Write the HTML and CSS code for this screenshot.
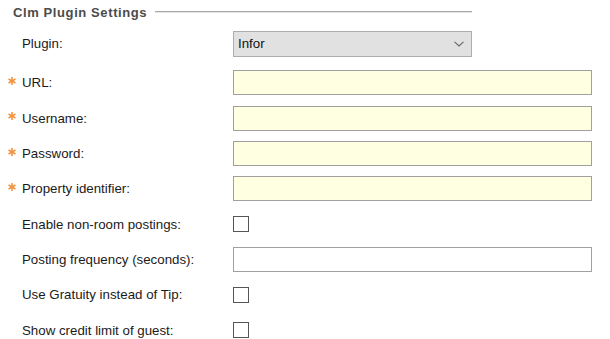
FILE: index.html
```html
<!DOCTYPE html>
<html lang="en">
<head>
    <meta charset="UTF-8">
    <title>Clm Plugin Settings</title>
    <link rel="stylesheet" href="styles.css">
</head>
<body>
    <div class="settings">
        <div class="group-header">
            <span class="group-title">Clm Plugin Settings</span>
            <span class="group-line"></span>
        </div>

        <div class="row first">
            <span class="req"></span>
            <label>Plugin:</label>
            <div class="combo">
                <span>Infor</span>
                <svg width="10" height="6" viewBox="0 0 10 6"><polyline points="0.5,0.8 5,5 9.5,0.8" fill="none" stroke="#666666" stroke-width="1.1"/></svg>
            </div>
        </div>

        <div class="row">
            <span class="req"><svg width="8" height="8" viewBox="0 0 8 8"><g stroke="#f39440" stroke-width="1.6"><line x1="4" y1="0" x2="4" y2="8"/><line x1="0.5" y1="2" x2="7.5" y2="6"/><line x1="0.5" y1="6" x2="7.5" y2="2"/></g></svg></span>
            <label for="url">URL:</label>
            <input type="text" id="url" class="field required">
        </div>

        <div class="row">
            <span class="req"><svg width="8" height="8" viewBox="0 0 8 8"><g stroke="#f39440" stroke-width="1.6"><line x1="4" y1="0" x2="4" y2="8"/><line x1="0.5" y1="2" x2="7.5" y2="6"/><line x1="0.5" y1="6" x2="7.5" y2="2"/></g></svg></span>
            <label for="username">Username:</label>
            <input type="text" id="username" class="field required">
        </div>

        <div class="row">
            <span class="req"><svg width="8" height="8" viewBox="0 0 8 8"><g stroke="#f39440" stroke-width="1.6"><line x1="4" y1="0" x2="4" y2="8"/><line x1="0.5" y1="2" x2="7.5" y2="6"/><line x1="0.5" y1="6" x2="7.5" y2="2"/></g></svg></span>
            <label for="password">Password:</label>
            <input type="text" id="password" class="field required">
        </div>

        <div class="row">
            <span class="req"><svg width="8" height="8" viewBox="0 0 8 8"><g stroke="#f39440" stroke-width="1.6"><line x1="4" y1="0" x2="4" y2="8"/><line x1="0.5" y1="2" x2="7.5" y2="6"/><line x1="0.5" y1="6" x2="7.5" y2="2"/></g></svg></span>
            <label for="property">Property identifier:</label>
            <input type="text" id="property" class="field required">
        </div>

        <div class="row">
            <span class="req"></span>
            <label>Enable non-room postings:</label>
            <span class="check"></span>
        </div>

        <div class="row">
            <span class="req"></span>
            <label for="frequency">Posting frequency (seconds):</label>
            <input type="text" id="frequency" class="field">
        </div>

        <div class="row">
            <span class="req"></span>
            <label>Use Gratuity instead of Tip:</label>
            <span class="check"></span>
        </div>

        <div class="row">
            <span class="req"></span>
            <label>Show credit limit of guest:</label>
            <span class="check"></span>
        </div>
    </div>
</body>
</html>
```

FILE: styles.css
```css
body {
    margin: 0;
    background-color: #ffffff;
    font-family: "Liberation Sans", Arial, sans-serif;
    font-size: 13.3px;
    color: #1b1b1b;
}
.settings {
    padding-left: 8px;
    width: 584px;
}
.group-header {
    display: flex;
    align-items: center;
    width: 459px;
    height: 16px;
    padding-top: 4px;
    margin-left: 5px;
    margin-bottom: 6px;
}
.group-title {
    font-size: 13px;
    font-weight: bold;
    color: #4b4b4b;
    letter-spacing: 0.6px;
    white-space: nowrap;
}
.group-line {
    flex: 1;
    margin-left: 8px;
    border-top: 1px solid #a9a9a9;
    border-bottom: 1px solid #e4e4e4;
}
.row {
    display: grid;
    grid-template-columns: 14px 211px 359px;
    align-items: center;
    height: 35.3px;
}
.row.first {
    margin-bottom: 4px;
}
.req {
    display: flex;
    align-items: center;
    height: 8px;
    margin-top: -4px;
}
label {
    white-space: nowrap;
}
.combo {
    display: flex;
    align-items: center;
    justify-content: space-between;
    box-sizing: border-box;
    width: 239px;
    height: 26px;
    padding: 0 7px 0 4px;
    background-color: #e1e1e1;
    border: 1px solid #adadad;
    color: #111111;
}
.field {
    box-sizing: border-box;
    width: 359px;
    height: 25px;
    margin: 0;
    padding: 0 4px;
    border: 1px solid #a0a0a0;
    border-radius: 0;
    background-color: #ffffff;
    font: inherit;
}
.field.required {
    background-color: #ffffe1;
}
.check {
    box-sizing: border-box;
    width: 16px;
    height: 16px;
    border: 1px solid #555555;
    background-color: #ffffff;
}
```
